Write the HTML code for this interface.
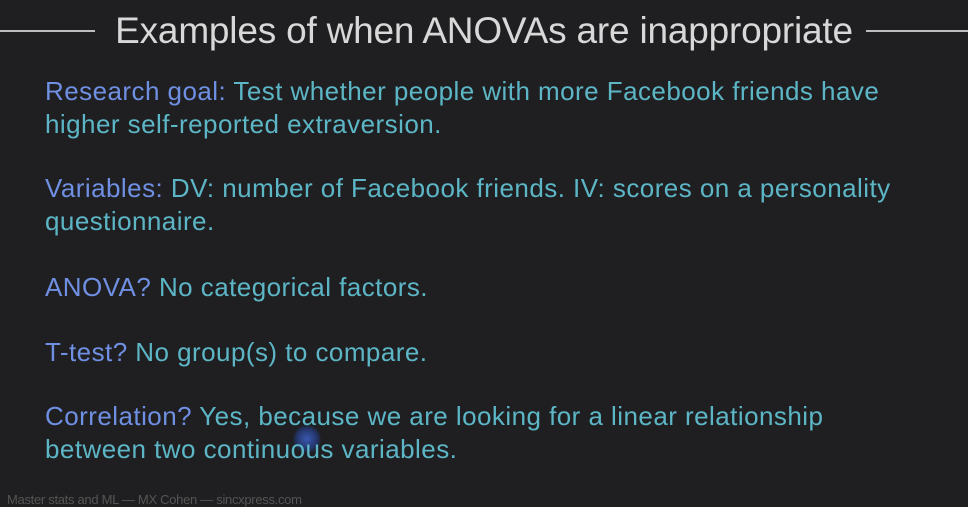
<!DOCTYPE html>
<html><head><meta charset="utf-8"><style>
body{margin:0;width:968px;height:506px;background:#1f1f21;overflow:hidden;position:relative;font-family:"Liberation Sans",sans-serif}
.t{position:absolute;top:10px;left:0;width:968px;text-align:center;font-size:37px;color:#d8d8d8;font-weight:300;letter-spacing:-0.2px}
.ln{position:absolute;top:30px;height:2px;background:#bdbdbd}
.p{position:absolute;left:45px;font-size:26px;line-height:33px;color:#5cb6c6;white-space:nowrap;letter-spacing:0.45px}
.b{color:#6f8fe2}
.f{position:absolute;left:7px;top:492px;font-size:13px;color:#555;letter-spacing:-0.3px}
.dot{position:absolute;left:293px;top:425px;width:28px;height:28px;border-radius:50%;background:radial-gradient(circle,#3a58b0 0%,rgba(40,70,160,.6) 50%,rgba(31,31,33,0) 75%)}
</style></head><body>
<div class="ln" style="left:0;width:95px"></div>
<div class="ln" style="left:866px;width:102px"></div>
<div class="t">Examples of when ANOVAs are inappropriate</div>
<div class="p" style="top:75px"><span class="b">Research goal:</span> Test whether people with more Facebook friends have<br>higher self-reported extraversion.</div>
<div class="p" style="top:172px"><span class="b">Variables:</span> DV: number of Facebook friends. IV: scores on a personality<br>questionnaire.</div>
<div class="p" style="top:271px"><span class="b">ANOVA?</span> No categorical factors.</div>
<div class="p" style="top:336px"><span class="b">T-test?</span> No group(s) to compare.</div>
<div class="dot"></div>
<div class="p" style="top:400px"><span class="b">Correlation?</span> Yes, because we are looking for a linear relationship<br>between two continuous variables.</div>
<div class="f">Master stats and ML — MX Cohen — sincxpress.com</div>
</body></html>
